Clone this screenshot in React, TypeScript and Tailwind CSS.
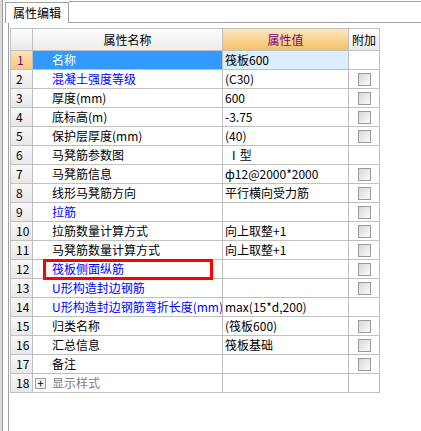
import React from 'react';

interface Row {
  name: string;
  value: string;
  check: boolean;
  blue?: boolean;
}

const rows: Row[] = [
  { name: '名称', value: '筏板600', check: false },
  { name: '混凝土强度等级', value: '(C30)', check: true, blue: true },
  { name: '厚度(mm)', value: '600', check: true },
  { name: '底标高(m)', value: '-3.75', check: true },
  { name: '保护层厚度(mm)', value: '(40)', check: true },
  { name: '马凳筋参数图', value: ' Ⅰ型', check: false },
  { name: '马凳筋信息', value: 'ф12@2000*2000', check: true },
  { name: '线形马凳筋方向', value: '平行横向受力筋', check: true },
  { name: '拉筋', value: '', check: true, blue: true },
  { name: '拉筋数量计算方式', value: '向上取整+1', check: true },
  { name: '马凳筋数量计算方式', value: '向上取整+1', check: true },
  { name: '筏板侧面纵筋', value: '', check: true, blue: true },
  { name: 'U形构造封边钢筋', value: '', check: true, blue: true },
  { name: 'U形构造封边钢筋弯折长度(mm)', value: 'max(15*d,200)', check: false, blue: true },
  { name: '归类名称', value: '(筏板600)', check: true },
  { name: '汇总信息', value: '筏板基础', check: true },
  { name: '备注', value: '', check: true },
];

const CheckBox: React.FC = () => (
  <div className="w-[13px] h-[13px] border border-[#9a9a9a] bg-linear-to-br from-[#d8d8d8] to-[#fbfbfb]" />
);

const App: React.FC = () => {
  return (
    <div
      className="w-[421px] h-[431px] bg-white flex flex-col text-[12px] leading-[16px] text-black overflow-hidden"
      style={{ fontFamily: '"Noto Sans CJK SC", "Noto Sans", sans-serif' }}
    >
      {/* tab strip */}
      <div className="flex h-[23px] shrink-0">
        <div className="w-[5px] flex">
          <div className="w-[3px] bg-[#dcdcdc] border-r border-[#9a9a9a]" />
        </div>
        <div className="w-[64px] mt-[2px] border-l border-t border-r border-[#a0a0a0] bg-white flex items-center pl-[7px] text-[12px]">
          属性编辑
        </div>
        <div className="flex-1 mt-[1px] border-t border-b border-[#a0a0a0]" />
      </div>

      {/* body */}
      <div className="flex flex-1">
        <div className="w-[10px] flex shrink-0">
          <div className="w-[3px] bg-[#dcdcdc] border-r border-[#9a9a9a]" />
          <div className="w-[5px]" />
          <div className="w-[1px] bg-[#a0a0a0]" />
        </div>

        <div className="mt-[5px]">
          <div className="w-[370px] border-l border-t border-[#c0c0c0]">
            {/* header */}
            <div className="flex h-[22px] border-b border-[#c0c0c0]">
              <div className="w-[22px] border-r border-[#c0c0c0] bg-linear-to-b from-[#fdfdfd] to-[#e9e9e9]" />
              <div className="w-[190px] border-r border-[#c0c0c0] bg-linear-to-b from-[#fdfdfd] to-[#ececec] flex items-center justify-center">
                属性名称
              </div>
              <div className="w-[126px] border-r border-[#c0c0c0] bg-linear-to-b from-[#fce7bd] to-[#f4c166] flex items-center justify-center text-[#800080]">
                属性值
              </div>
              <div className="w-[31px] border-r border-[#c0c0c0] bg-linear-to-b from-[#fdfdfd] to-[#ececec] flex items-center justify-center">
                附加
              </div>
            </div>

            {rows.map((r, i) => {
              const first = i === 0;
              return (
                <div key={i} className="flex h-[19px] border-b border-[#c0c0c0]">
                  <div
                    className={
                      first
                        ? 'w-[22px] border-r border-[#c0c0c0] bg-linear-to-b from-[#fde2ad] to-[#f7c97c] text-[#800080] flex items-center pl-[6px]'
                        : 'w-[22px] border-r border-[#c0c0c0] bg-linear-to-b from-[#f8f8f8] to-[#e8e8e8] flex items-center pl-[5px]'
                    }
                  >
                    {i + 1}
                  </div>
                  <div
                    className={
                      first
                        ? 'w-[190px] border-r border-[#c0c0c0] bg-[#3399ff] text-white flex items-center pl-[19px] whitespace-nowrap'
                        : `relative w-[190px] border-r border-[#c0c0c0] flex items-center pl-[19px] whitespace-nowrap ${r.blue ? 'text-[#0000ff]' : 'text-black'}`
                    }
                  >
                    <span className="overflow-hidden">{r.name}</span>
                    {i === 11 && (
                      <div className="absolute left-[10px] top-[-1px] w-[170px] h-[21px] border-[3px] border-[#ff0000]" />
                    )}
                  </div>
                  <div
                    className={`w-[126px] border-r border-[#c0c0c0] flex items-center pl-[2px] whitespace-pre ${first ? 'bg-[#ddeeff]' : ''}`}
                  >
                    {r.value}
                  </div>
                  <div className="w-[31px] border-r border-[#c0c0c0] flex items-center justify-center">
                    {r.check && <CheckBox />}
                  </div>
                </div>
              );
            })}

            {/* row 18 */}
            <div className="flex h-[19px] border-b border-[#c0c0c0]">
              <div className="w-[22px] border-r border-[#c0c0c0] bg-linear-to-b from-[#f8f8f8] to-[#e8e8e8] flex items-center pl-[5px]">
                18
              </div>
              <div className="w-[190px] border-r border-[#c0c0c0] flex items-center pl-[2px] text-[#808080]">
                <div className="w-[11px] h-[11px] border border-[#a0a0a0] bg-[#f0f0f0] flex items-center justify-center text-black text-[11px] leading-none mr-[6px]">
                  +
                </div>
                显示样式
              </div>
              <div className="w-[126px] border-r border-[#c0c0c0]" />
              <div className="w-[31px] border-r border-[#c0c0c0]" />
            </div>
          </div>
        </div>
      </div>
    </div>
  );
};

export default App;
